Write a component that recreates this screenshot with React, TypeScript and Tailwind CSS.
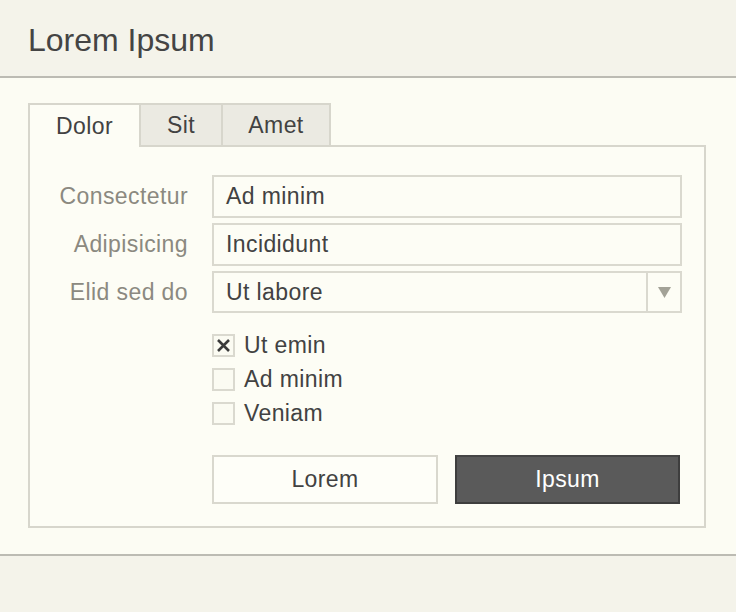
import React from "react";

const font = { fontFamily: '"Liberation Sans", Arial, sans-serif' };

function Field({ label, value }: { label: string; value: string }) {
  return (
    <>
      <div className="flex h-[43px] items-center justify-end text-[#8b8980]">{label}</div>
      <div className="flex h-[43px] items-center border-2 border-[#dad9cf] bg-[#fdfdf5] pl-[12px] text-[#424242]">
        {value}
      </div>
    </>
  );
}

function Check({ label, checked }: { label: string; checked?: boolean }) {
  return (
    <div className="flex h-[34px] items-center gap-[9px]">
      <div className="flex h-[23px] w-[23px] items-center justify-center border-2 border-[#dad9cf] bg-[#fbfbf2]">
        {checked && (
          <svg width="15" height="15" viewBox="0 0 15 15">
            <path d="M2 2 L13 13 M13 2 L2 13" stroke="#3a3a3a" strokeWidth="2.6" strokeLinecap="butt" />
          </svg>
        )}
      </div>
      <span className="text-[#424242]">{label}</span>
    </div>
  );
}

export default function App() {
  return (
    <div
      className="flex min-h-[612px] flex-col bg-[#f4f3ea] text-[23px] leading-none tracking-[0.4px]"
      style={font}
    >
      <header className="flex h-[78px] shrink-0 items-center border-b-2 border-[#bcbbb3] bg-[#f4f3ea] px-[28px] pt-[4px]">
        <h1 className="text-[32px] tracking-normal text-[#444444]">Lorem Ipsum</h1>
      </header>

      <main className="h-[478px] shrink-0 border-b-2 border-[#bcbbb3] bg-[#fcfcf3] px-[28px] pt-[25px]">
        <div className="w-[678px]">
          <div className="flex h-[44px]">
            <div className="flex w-[111px] items-center justify-center border-l-2 border-t-2 border-[#d7d6cc] bg-[#fdfdf5] text-[#424242]">
              Dolor
            </div>
            <div className="flex w-[82px] items-center justify-center border-2 border-r-0 border-[#d7d6cc] bg-[#ebeae2] text-[#424242]">
              Sit
            </div>
            <div className="flex w-[110px] items-center justify-center border-2 border-[#d7d6cc] bg-[#ebeae2] text-[#424242]">
              Amet
            </div>
            <div className="flex-1 border-b-2 border-[#d7d6cc]" />
          </div>

          <div className="h-[381px] border-2 border-t-0 border-[#d7d6cc] bg-[#fdfdf5] pt-[28px]">
            <div className="grid grid-cols-[158px_470px] gap-x-[24px] gap-y-[5px]">
              <Field label="Consectetur" value="Ad minim" />
              <Field label="Adipisicing" value="Incididunt" />
              <div className="flex h-[42px] items-center justify-end text-[#8b8980]">Elid sed do</div>
              <div className="flex h-[42px] border-2 border-[#dad9cf] bg-[#fdfdf5] text-[#424242]">
                <div className="flex flex-1 items-center pl-[12px]">Ut labore</div>
                <div className="flex w-[34px] items-center justify-center border-l-2 border-[#dad9cf]">
                  <svg width="13" height="11" viewBox="0 0 13 11">
                    <path d="M0 0 H13 L6.5 11 Z" fill="#a3a297" />
                  </svg>
                </div>
              </div>
            </div>

            <div className="ml-[182px] mt-[15px] flex flex-col">
              <Check label="Ut emin" checked />
              <Check label="Ad minim" />
              <Check label="Veniam" />
            </div>

            <div className="ml-[182px] mt-[25px] flex gap-[17px]">
              <button className="flex h-[49px] w-[226px] items-center justify-center border-2 border-[#d9d8ce] bg-[#fefef8] text-[#424242]">
                Lorem
              </button>
              <button className="flex h-[49px] w-[225px] items-center justify-center border-2 border-[#3e3e3e] border-t-[#454545] bg-[#5a5a5a] text-white">
                Ipsum
              </button>
            </div>
          </div>
        </div>
      </main>

      <footer className="flex-1 bg-[#f4f3ea]" />
    </div>
  );
}
